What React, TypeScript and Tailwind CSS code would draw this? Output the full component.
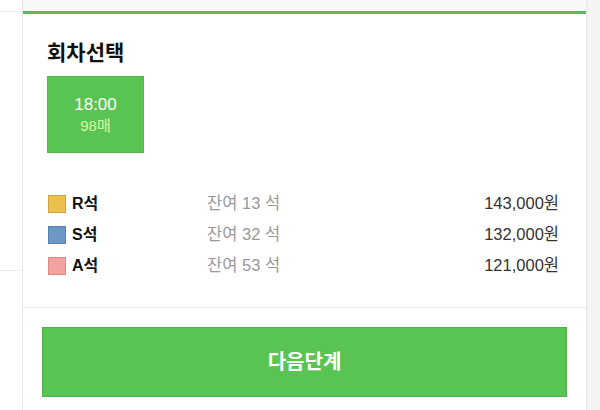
import React from "react";

interface SeatGrade {
  grade: string;
  color: string;
  border: string;
  remain: number;
  price: string;
}

const grades: SeatGrade[] = [
  { grade: "R석", color: "bg-[#ecc04e]", border: "border-[#cfa23a]", remain: 13, price: "143,000원" },
  { grade: "S석", color: "bg-[#6d98c6]", border: "border-[#5580ad]", remain: 32, price: "132,000원" },
  { grade: "A석", color: "bg-[#f2a2a0]", border: "border-[#d98886]", remain: 53, price: "121,000원" },
];

const App: React.FC = () => {
  return (
    <div
      className="flex h-[410px] w-[600px] overflow-hidden bg-white"
      style={{ fontFamily: '"Liberation Sans", "Noto Sans CJK KR", sans-serif' }}
    >
      {/* 왼쪽 영역 */}
      <div className="w-[22px] shrink-0 bg-white">
        <div className="h-[11px]"></div>
        <div className="h-[260px] border-y border-[#ececec]"></div>
      </div>

      {/* 회차 패널 */}
      <div className="flex w-[565px] shrink-0 flex-col border-x border-[#e6e6e6]">
        <div className="h-[11px] bg-[#f7f8f8]"></div>
        <div className="h-[3px] bg-[#5cb85c]"></div>

        <div className="px-[24px] pt-[25px]">
          <h2 className="text-[21px] font-bold leading-[28px] text-[#111]">회차선택</h2>

          <div className="mt-[9px] flex h-[77px] w-[97px] flex-col items-center justify-center border border-[#52b84a] bg-[#5ac452]">
            <span className="text-[17px] leading-[20px] text-white">18:00</span>
            <span className="mt-[2px] text-[15px] leading-[18px] text-[#d9f7a3]">98매</span>
          </div>

          <div className="mt-[35px] pr-[3px]">
            {grades.map((g) => (
              <div key={g.grade} className="flex h-[31px] items-center">
                <div className="flex w-[160px] items-center">
                  <span className={`ml-[1px] h-[18px] w-[18px] border ${g.color} ${g.border}`}></span>
                  <span className="ml-[6px] text-[16px] font-bold text-[#111]">{g.grade}</span>
                </div>
                <span className="text-[16.5px] text-[#999]">잔여 {g.remain} 석</span>
                <span className="ml-auto text-[16.5px] text-[#333]">{g.price}</span>
              </div>
            ))}
          </div>
        </div>

        <div className="mt-[26px] border-t border-[#e6e6e6] px-[19px] pt-[19px]">
          <button className="flex h-[70px] w-full items-center justify-center border border-[#4fb347] bg-[#5ac452] text-[20px] font-bold text-white">
            다음단계
          </button>
        </div>
      </div>

      {/* 오른쪽 여백 */}
      <div className="flex-1 bg-[#f4f4f4]"></div>
    </div>
  );
};

export default App;
